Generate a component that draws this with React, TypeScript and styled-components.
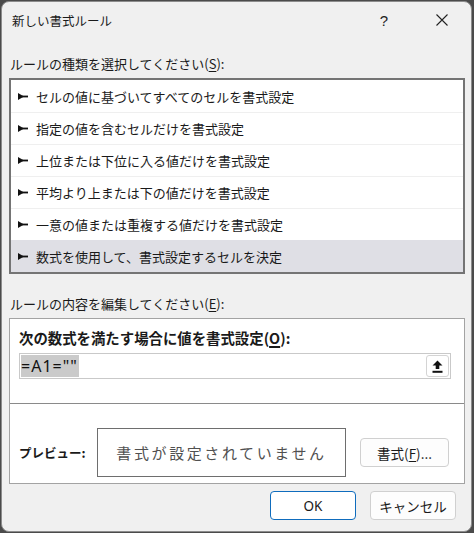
import * as React from 'react';
import styled, { createGlobalStyle, css } from 'styled-components';

const GlobalStyle = createGlobalStyle`
  html, body {
    margin: 0;
    padding: 0;
    background: #4b4b4b;
  }
  body {
    font-family: "Noto Sans CJK JP", "Noto Sans", sans-serif;
    color: #1a1a1a;
  }
`;

const RULE_TYPES = [
  'セルの値に基づいてすべてのセルを書式設定',
  '指定の値を含むセルだけを書式設定',
  '上位または下位に入る値だけを書式設定',
  '平均より上または下の値だけを書式設定',
  '一意の値または重複する値だけを書式設定',
  '数式を使用して、書式設定するセルを決定',
];

const Window = styled.div`
  box-sizing: border-box;
  margin: 1px 0 0 1px;
  width: 471px;
  height: 531px;
  background: #f0f0f0;
  border: 1px solid #8c8c8c;
  border-radius: 8px;
  overflow: hidden;
  display: flex;
  flex-direction: column;
`;

const TitleBar = styled.div`
  display: flex;
  align-items: center;
  height: 36px;
  padding-left: 10px;
`;

const Title = styled.div`
  flex: 1;
  font-size: 12.5px;
  color: #1a1a1a;
`;

const CaptionButton = styled.div`
  width: 58px;
  height: 36px;
  display: flex;
  align-items: center;
  justify-content: center;
  font-family: "Liberation Sans", sans-serif;
  font-size: 15px;
  color: #222;
`;

const Body = styled.div`
  display: flex;
  flex-direction: column;
  padding: 0 6px 0 7px;
`;

const Label = styled.div<{ $top: number }>`
  font-size: 13px;
  line-height: 16px;
  padding-left: 1px;
  margin-top: ${p => p.$top}px;
  margin-bottom: 6px;
  u { text-decoration-thickness: 1px; text-underline-offset: 2px; }
`;

const ListBox = styled.div`
  background: #fff;
  border: 2px solid #747474;
  display: flex;
  flex-direction: column;
`;

const ListItem = styled.div<{ $selected?: boolean }>`
  box-sizing: border-box;
  height: 32px;
  display: flex;
  align-items: center;
  padding-left: 7px;
  gap: 8px;
  font-size: 13px;
  border-top: 1px solid #efefef;
  &:first-child { border-top: none; }
  ${p => p.$selected && css`
    background: #dfdfe5;
    border-top-color: #dfdfe5;
  `}
`;

const Panel = styled.div`
  background: #fff;
  border: 1px solid #a3a3a3;
  display: flex;
  flex-direction: column;
`;

const FormulaSection = styled.div`
  padding: 10px 13px 24px 9px;
  border-bottom: 1px solid #8a8a8a;
`;

const BoldLabel = styled.div`
  font-size: 14.4px;
  font-weight: 700;
  line-height: 18px;
  u { text-decoration-thickness: 2px; text-underline-offset: 2px; }
`;

const FormulaInput = styled.div`
  margin-top: 6px;
  height: 26px;
  box-sizing: border-box;
  border: 1px solid #c9c9c9;
  display: flex;
  align-items: center;
  padding: 0 1px 0 1px;
`;

const FormulaText = styled.span`
  font-family: "Noto Sans", "Liberation Sans", sans-serif;
  font-size: 16px;
  line-height: 22px;
  background: #cacaca;
  color: #111;
  padding-right: 1px;
  letter-spacing: 1px;
`;

const CollapseButton = styled.div`
  margin-left: auto;
  width: 23px;
  height: 22px;
  box-sizing: border-box;
  border: 1px solid #d4d4d4;
  border-radius: 3px;
  display: flex;
  align-items: center;
  justify-content: center;
`;

const PreviewRow = styled.div`
  display: flex;
  align-items: center;
  padding: 24px 15px 6px 9px;
`;

const PreviewLabel = styled.div`
  font-size: 12.5px;
  font-weight: 700;
  width: 78px;
`;

const PreviewBox = styled.div`
  width: 249px;
  height: 49px;
  box-sizing: border-box;
  border: 1px solid #6e6e6e;
  display: flex;
  align-items: center;
  justify-content: center;
  font-size: 15px;
  letter-spacing: 2.6px;
  color: #505050;
`;

const Button = styled.div<{ $default?: boolean; $width: number }>`
  box-sizing: border-box;
  width: ${p => p.$width}px;
  height: 29px;
  border: 1px solid #d0d0d0;
  border-radius: 4px;
  background: #fdfdfd;
  display: flex;
  align-items: center;
  justify-content: center;
  font-size: 13.5px;
  color: #1a1a1a;
  ${p => p.$default && css`
    border: 1px solid #0f6cbd;
    background: #fff;
  `}
  u { text-decoration-thickness: 1px; text-underline-offset: 2px; }
`;

const FormatButton = styled(Button)`
  margin-left: auto;
`;

const Footer = styled.div`
  display: flex;
  justify-content: flex-end;
  gap: 14px;
  padding: 7px 9px 0 0;
`;

const Latin = styled.span`
  font-family: "Noto Sans", "Liberation Sans", sans-serif;
`;

const Marker = () => (
  <svg width="10" height="7" viewBox="0 0 10 7">
    <polygon points="0,0 6,3.5 0,7" fill="#111" />
    <rect x="4" y="2.6" width="6" height="1.8" fill="#111" />
  </svg>
);

const CloseIcon = () => (
  <svg width="12" height="12" viewBox="0 0 12 12">
    <path d="M0.5 0.5 L11.5 11.5 M11.5 0.5 L0.5 11.5" stroke="#222" strokeWidth="1.1" />
  </svg>
);

const CollapseIcon = () => (
  <svg width="11" height="13" viewBox="0 0 11 13">
    <path d="M5.5 0.5 L10.5 5.5 H7.3 V9 H3.7 V5.5 H0.5 Z" fill="#111" />
    <rect x="0.5" y="10.8" width="10" height="2" fill="#111" />
  </svg>
);

export default function App() {
  return (
    <>
      <GlobalStyle />
      <Window>
        <TitleBar>
          <Title>新しい書式ルール</Title>
          <CaptionButton>?</CaptionButton>
          <CaptionButton><CloseIcon /></CaptionButton>
        </TitleBar>
        <Body>
          <Label $top={18}>ルールの種類を選択してください(<u>S</u>):</Label>
          <ListBox>
            {RULE_TYPES.map((t, i) => (
              <ListItem key={t} $selected={i === RULE_TYPES.length - 1}>
                <Marker />
                <span>{t}</span>
              </ListItem>
            ))}
          </ListBox>
          <Label $top={22}>ルールの内容を編集してください(<u>E</u>):</Label>
          <Panel>
            <FormulaSection>
              <BoldLabel>次の数式を満たす場合に値を書式設定(<u>O</u>):</BoldLabel>
              <FormulaInput>
                <FormulaText>=A1=""</FormulaText>
                <CollapseButton><CollapseIcon /></CollapseButton>
              </FormulaInput>
            </FormulaSection>
            <PreviewRow>
              <PreviewLabel>プレビュー:</PreviewLabel>
              <PreviewBox>書式が設定されていません</PreviewBox>
              <FormatButton $width={89}>
                書式(<u>F</u>)...
              </FormatButton>
            </PreviewRow>
          </Panel>
          <Footer>
            <Button $default $width={86}><Latin>OK</Latin></Button>
            <Button $width={86}>キャンセル</Button>
          </Footer>
        </Body>
      </Window>
    </>
  );
}
